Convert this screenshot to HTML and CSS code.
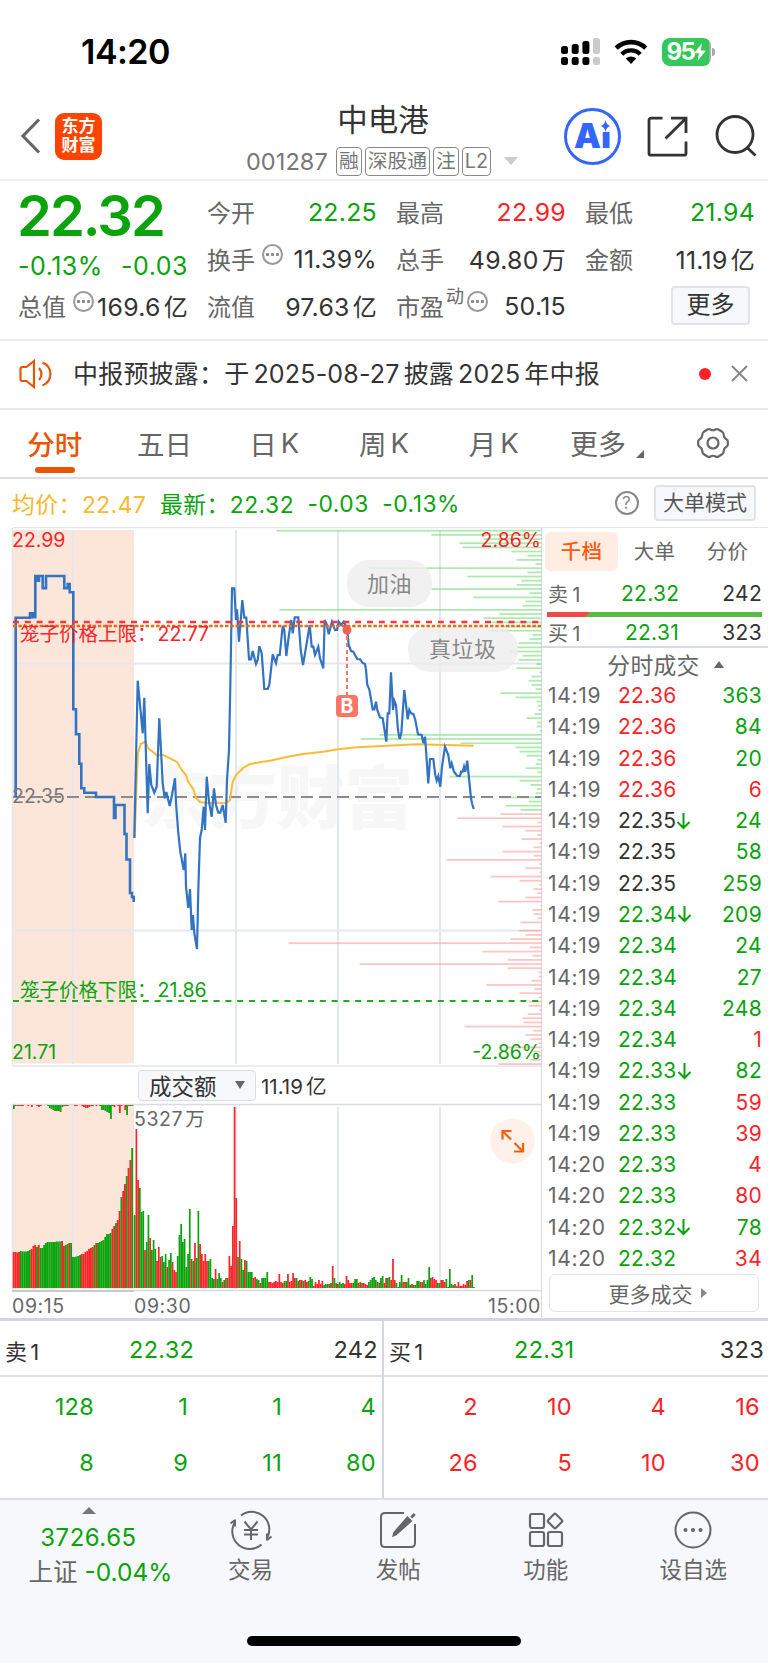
FILE: index.html
```
<!DOCTYPE html>
<html lang="zh-CN">
<head>
    <meta charset="UTF-8">
    <title>中电港 001287</title>
    <link rel="stylesheet" href="styles.css">
</head>
<body>
<div class="status-bar">
    <span class="clock">14:20</span>
    <div class="status-icons">
        <svg class="signal" width="40" height="28" viewBox="0 0 40 28">
            <rect x="0" y="8" width="7" height="8" rx="2.5"/>
            <rect x="10.7" y="6" width="7" height="10" rx="2.5"/>
            <rect x="21.4" y="3" width="7" height="13" rx="2.5"/>
            <rect x="32" y="0" width="7" height="16" rx="2.5" fill="#cacaca"/>
            <rect x="0" y="19" width="7" height="8" rx="2.5"/>
            <rect x="10.7" y="19" width="7" height="8" rx="2.5"/>
            <rect x="21.4" y="19" width="7" height="8" rx="2.5"/>
            <rect x="32" y="19" width="7" height="8" rx="2.5" fill="#cacaca"/>
        </svg>
        <svg class="wifi" width="34" height="26" viewBox="0 0 34 26">
            <path d="M2.2 9.2a21 21 0 0 1 29.6 0" fill="none" stroke="#000" stroke-width="4.6"/>
            <path d="M7.8 15.2a13 13 0 0 1 18.4 0" fill="none" stroke="#000" stroke-width="4.4"/>
            <path d="M17 25l-5.2-5.4a7.6 7.6 0 0 1 10.4 0z"/>
        </svg>
        <div class="battery">95<svg width="12" height="18" viewBox="0 0 12 18"><path d="M8 0L0 10.3h5L3.6 18 12 7.4H6.8z" fill="#fff"/></svg></div>
    </div>
</div>

<header class="header">
    <div class="header-side">
        <svg width="21" height="36" viewBox="0 0 21 36"><path d="M19 1.5L3 18l16 16.5" fill="none" stroke="#666" stroke-width="3.2"/></svg>
        <div class="logo">东方<br>财富</div>
    </div>
    <div class="header-title">
        <h1>中电港</h1>
        <div class="code-line">
            <span class="code">001287</span>
            <span class="tag">融</span><span class="tag">深股通</span><span class="tag">注</span><span class="tag">L2</span>
            <i class="caret"></i>
        </div>
    </div>
    <div class="header-side header-tools">
        <div class="ai">Ai<svg width="11" height="12" viewBox="0 0 10 12"><path d="M5 0q.8 5 5 6-4.200 1-5 6-.8-5-5-6 4.200-1 5-6z" fill="#36f"/></svg></div>
        <svg width="41" height="41" viewBox="0 0 41 41" fill="none" stroke="#333" stroke-width="2.800">
            <path d="M15.500 2.200H4a2 2 0 0 0-2 2v33a2 2 0 0 0 2 2h33a2 2 0 0 0 2-2V25.500M24 2.200h15V17M39 2.200L18.500 22.500"/>
        </svg>
        <svg width="42" height="42" viewBox="0 0 42 42" fill="none" stroke="#333" stroke-width="2.800">
            <circle cx="20" cy="19.500" r="18"/><path d="M32 32.500l8.500 8"/>
        </svg>
    </div>
</header>

<section class="quote">
    <div class="quote-price">
        <div class="price">22.32</div>
        <div class="change"><span>-0.13%</span><span>-0.03</span></div>
    </div>
    <div class="cell"><span>今开</span><b class="green">22.25</b></div>
    <div class="cell"><span>最高</span><b class="red">22.99</b></div>
    <div class="cell"><span>最低</span><b class="green">21.94</b></div>
    <div class="cell"><span>换手</span><i class="dots"></i><b>11.39%</b></div>
    <div class="cell"><span>总手</span><b>49.80<em>万</em></b></div>
    <div class="cell"><span>金额</span><b>11.19<em>亿</em></b></div>
    <div class="cell"><span>总值</span><i class="dots"></i><b>169.6<em>亿</em></b></div>
    <div class="cell"><span>流值</span><b>97.63<em>亿</em></b></div>
    <div class="cell"><span>市盈</span><sup>动</sup><i class="dots tight"></i><b>50.15</b></div>
    <div class="cell"><button class="more-btn">更多</button></div>
</section>

<div class="notice">
    <svg width="33" height="30" viewBox="0 0 33 30" fill="none" stroke="#ea5504" stroke-width="2.200">
        <path d="M15 2L7.500 8H3.500Q1.500 8 1.500 10v10q0 2 2 2h4L15 28z"/><path d="M20 9q5 6 0 12M23.500 3.500C34 8 34 22 23.500 26.500"/>
    </svg>
    <p>中报预披露：于<em></em>2025-08-27<em></em>披露<em></em>2025<em></em>年中报</p>
    <i class="dot"></i>
    <svg width="17" height="17" viewBox="0 0 17 17"><path d="M1 1l15 15M16 1L1 16" stroke="#888" stroke-width="2"/></svg>
</div>

<nav class="tabs">
    <a class="active">分时</a>
    <a>五日</a>
    <a>日<em></em>K</a>
    <a>周<em></em>K</a>
    <a>月<em></em>K</a>
    <a class="tab-more">更多<i></i></a>
    <a><svg width="34" height="34" viewBox="0 0 34 34" fill="none" stroke="#666" stroke-width="2.200" stroke-linejoin="round">
        <path d="M11.500 3.500q1.500-1 3 0 2.500 1.500 5 0 1.500-1 3 0l4 2.500q1.300 1 1.200 3 0 2.500 2.300 4 1.800 1 1.800 2.300v3.400q0 1.300-1.800 2.300-2.300 1.500-2.300 4 .1 2-1.200 3l-4 2.500q-1.500 1-3 0-2.500-1.500-5 0-1.500 1-3 0l-4-2.500q-1.300-1-1.200-3 0-2.500-2.300-4-1.800-1-1.800-2.300v-3.400q0-1.300 1.800-2.300 2.300-1.500 2.300-4-.1-2 1.200-3z"/>
        <circle cx="17" cy="17" r="5.500"/>
    </svg></a>
</nav>

<div class="info">
    <span class="avg">均价：22.47</span>
    <span class="green">最新：22.32</span>
    <span class="green">-0.03</span>
    <span class="green">-0.13%</span>
    <i class="help">?</i>
    <button class="mode-btn">大单模式</button>
</div>

<main class="board">
    <div class="charts">
        <svg id="priceChart" class="price-chart" width="542" height="540" viewBox="0 527 542 540"></svg>
        <div class="volume-head">
            <span class="select">成交额<i></i></span>
            <span>11.19<em>亿</em></span>
        </div>
        <svg id="volumeChart" class="volume-chart" width="542" height="216" viewBox="0 1103 542 216"></svg>
    </div>

    <aside class="side">
        <div class="side-tabs"><a class="active">千档</a><a>大单</a><a>分价</a></div>
        <div class="level"><span>卖<em></em>1</span><b class="green">22.32</b><b>242</b></div>
        <div class="ratio"><svg width="215" height="5" viewBox="0 0 215 5"><path d="M0 0h215v5H0z" fill="#5bb947"/><path d="M0 0h43l-5 5H0z" fill="#ee4a4a"/></svg></div>
        <div class="level"><span>买<em></em>1</span><b class="green">22.31</b><b>323</b></div>
        <div class="trades-title">分时成交<i></i></div>
        <div id="trades" class="trades"></div>
        <button class="trades-more">更多成交<i></i></button>
    </aside>
</main>

<section class="depth">
    <div class="depth-half">
        <div class="depth-head"><span>卖<em></em>1</span><b class="green">22.32</b><b>242</b></div>
        <div class="depth-grid green">
            <span>128</span><span>1</span><span>1</span><span>4</span>
            <span>8</span><span>9</span><span>11</span><span>80</span>
        </div>
    </div>
    <div class="depth-half">
        <div class="depth-head"><span>买<em></em>1</span><b class="green">22.31</b><b>323</b></div>
        <div class="depth-grid red">
            <span>2</span><span>10</span><span>4</span><span>16</span>
            <span>26</span><span>5</span><span>10</span><span>30</span>
        </div>
    </div>
</section>

<footer class="bottom">
    <div class="bottom-nav">
        <div class="index">
            <i></i>
            <div class="green">3726.65</div>
            <div>上证 <span class="green">-0.04%</span></div>
        </div>
        <a>
            <svg width="44" height="40" viewBox="0 0 44 40" fill="none" stroke="#666" stroke-width="2">
                <path d="M12 5.500A17.500 17.500 0 0 1 38.500 27M38 30.500v-7M38 30l4.500-3.500M32.500 34.500A17.500 17.500 0 0 1 5.500 13M6 9.500v7M6 10l-4.500 3.500"/>
                <path d="M15.500 11.500l6.500 8 6.500-8M22 19.500V30M15 20h14M15 24.500h14"/>
            </svg>
            <span>交易</span>
        </a>
        <a>
            <svg width="40" height="40" viewBox="0 0 40 40" fill="none" stroke="#666" stroke-width="2">
                <path d="M26 3H7q-4 0-4 4v26q0 4 4 4h26q4 0 4-4V14"/>
                <path d="M29.500 7.500l3.500 3.500-15 13.500-2.500 1 .8-3z" fill="#666"/><path d="M34 4.800l2 2" stroke-width="5"/>
            </svg>
            <span>发帖</span>
        </a>
        <a>
            <svg width="36" height="40" viewBox="0 0 36 40" fill="none" stroke="#666" stroke-width="2.200">
                <rect x="2" y="4" width="14" height="14" rx="2"/><rect x="2" y="22" width="14" height="14" rx="2"/>
                <rect x="20" y="22" width="14" height="14" rx="2"/><rect x="21.500" y="5.500" width="11" height="11" rx="1.500" transform="rotate(45 27 11)"/>
            </svg>
            <span>功能</span>
        </a>
        <a>
            <svg width="40" height="40" viewBox="0 0 40 40" fill="none" stroke="#666" stroke-width="2">
                <circle cx="20" cy="20" r="17.500"/>
                <g fill="#666" stroke="none"><circle cx="12.500" cy="20" r="2"/><circle cx="20" cy="20" r="2"/><circle cx="27.500" cy="20" r="2"/></g>
            </svg>
            <span>设自选</span>
        </a>
    </div>
    <div class="home-bar"></div>
</footer>

<script src="chart.js"></script>
</body>
</html>
```
FILE: styles.css
```
* {
    box-sizing: border-box;
}
body {
    margin: 0;
    width: 768px;
    height: 1663px;
    overflow: hidden;
    background-color: #fff;
    color: #333;
    font-family: Inter, "Noto Sans CJK SC", sans-serif;
    font-size: 24px;
    display: flex;
    flex-direction: column;
}
b, em, i {
    font-weight: normal;
    font-style: normal;
}
em {
    margin-left: 4px;
}
svg {
    display: block;
    flex: none;
}
button {
    font-family: inherit;
    color: #333;
    padding: 0;
    border: 2px solid #e2e3e9;
    border-radius: 4px;
    background-color: #f7f8fb;
}
.green {
    color: #09a30c;
}
.red {
    color: #fa2327;
}

/* status bar */
.status-bar {
    height: 84px;
    padding: 18px 57px 0 81px;
    display: flex;
    justify-content: space-between;
}
.clock {
    font-size: 34px;
    line-height: 67px;
    font-weight: 600;
    letter-spacing: -0.5px;
    color: #000;
}
.status-icons {
    display: flex;
    align-items: center;
    height: 67px;
}
.wifi {
    margin: 0 14px 0 13px;
}
.battery {
    position: relative;
    width: 49px;
    height: 28px;
    border-radius: 8px;
    background: linear-gradient(90deg, #34c759 95%, #aaa 95%);
    color: #fff;
    font-size: 24px;
    font-weight: 700;
    letter-spacing: -1.5px;
    display: flex;
    align-items: center;
    justify-content: center;
}
.battery:after {
    content: "";
    position: absolute;
    right: -4px;
    top: 10px;
    width: 3px;
    height: 8px;
    border-radius: 0 3px 3px 0;
    background-color: #aaa;
}

/* header */
.header {
    height: 97px;
    padding: 0 11px 0 20px;
    border-bottom: 2px solid #f0f0f0;
    display: flex;
    justify-content: space-between;
}
.header-side {
    width: 196px;
    height: 104px;
    display: flex;
    align-items: center;
    gap: 14px;
}
.logo {
    width: 47px;
    height: 47px;
    padding-top: 4px;
    border-radius: 9px;
    background-color: #ff4400;
    color: #fff;
    font-size: 17px;
    line-height: 19px;
    font-weight: 700;
    text-align: center;
}
.header-title {
    display: flex;
    flex-direction: column;
    align-items: center;
}
.header-title h1 {
    margin: 18px 0 0;
    font-size: 30.5px;
    line-height: 36px;
    font-weight: 400;
}
.code-line {
    height: 30px;
    margin: 8px 0 0 -2px;
    display: flex;
    align-items: center;
    color: #777;
}
.code {
    font-size: 23.500px;
    margin-right: 8px;
    letter-spacing: 0.1px;
}
.tag {
    height: 29px;
    padding: 0 2px;
    margin-right: 3px;
    border: 1.500px solid #888;
    border-radius: 4px;
    font-size: 19.800px;
    line-height: 26px;
}
.caret {
    margin-left: 10px;
    border: 7px solid transparent;
    border-top: 8px solid #ccc;
    border-bottom: 0;
}
.header-tools {
    width: 207px;
    justify-content: flex-end;
    gap: 27px;
}
.header-tools .ai {
    margin-right: -1px;
}
.ai {
    position: relative;
    width: 57px;
    height: 57px;
    border: 3px solid #3366ff;
    border-radius: 50%;
    color: #3366ff;
    font-size: 34px;
    line-height: 50px;
    font-weight: 900;
    text-align: center;
}
.ai svg {
    position: absolute;
    right: 7px;
    top: 9px;
    background-color: #fff;
}

/* quote */
.quote {
    height: 160px;
    padding: 8px 13px 0 19px;
    border-bottom: 2px solid #ececee;
    display: grid;
    grid-template-columns: repeat(4, 1fr);
    grid-template-rows: repeat(3, 47px);
    column-gap: 20px;
}
.quote-price {
    grid-row: span 2;
    color: #09a30c;
}
.price {
    margin-left: -2px;
    font-size: 56px;
    line-height: 54px;
    font-weight: 600;
    letter-spacing: -2px;
}
.change {
    display: flex;
    justify-content: space-between;
    font-size: 25px;
    letter-spacing: 0.5px;
    line-height: 47px;
    margin-left: -1px;
}
.cell {
    display: flex;
    align-items: center;
    margin: -2px 0 0 -1px;
    white-space: nowrap;
}
.cell span {
    color: #666;
}
.cell b {
    margin-left: auto;
    font-size: 24.800px;
    letter-spacing: 0.3px;
}
.cell em {
    font-size: 24px;
    margin-left: 3px;
}
.cell sup {
    font-size: 18px;
    margin: -18px 0 0 2px;
    line-height: 20px;
    color: #666;
}
.dots {
    width: 21px;
    height: 21px;
    margin: -9px 0 0 7px;
    border: 2px solid #999;
    border-radius: 50%;
    background: radial-gradient(circle at 50% 50%, #888 1.3px, transparent 1.8px) center / 5px 17px;
}
.dots.tight {
    margin-left: 3px;
}
.more-btn {
    width: 79px;
    height: 39px;
    margin: -1px 5px 0 auto;
    font-size: 24px;
    line-height: 34px;
}

/* notice */
.notice {
    height: 69px;
    padding: 0 20px 2px 19px;
    border-bottom: 2px solid #e9e9ed;
    display: flex;
    align-items: center;
}
.notice p {
    margin: -4px auto 0 21px;
    font-size: 25px;
    letter-spacing: 0.2px;
}
.notice .dot {
    width: 12px;
    height: 12px;
    margin-right: 20px;
    border-radius: 50%;
    background-color: #fa2327;
}

/* period tabs */
.tabs {
    height: 69px;
    border-bottom: 2px solid #dddde5;
    display: grid;
    grid-template-columns: repeat(7, 1fr);
    color: #666;
    font-size: 27.500px;
}
.tabs a {
    position: relative;
    height: 65px;
    display: flex;
    align-items: center;
    justify-content: center;
}
.tabs .active {
    color: #ea5504;
    font-weight: 500;
}
.tabs .active:after {
    content: "";
    position: absolute;
    left: 35px;
    bottom: 2px;
    width: 40px;
    height: 6px;
    border-radius: 3px;
    background-color: #ea5504;
}
.tabs .tab-more {
    padding-left: 7px;
    font-size: 28px;
}
.tab-more i {
    margin: 22px 0 0 10px;
    border-left: 8px solid transparent;
    border-bottom: 8px solid #666;
}

/* average / latest line */
.info {
    height: 48px;
    padding: 0 12px 0 12px;
    display: flex;
    align-items: center;
    gap: 13.500px;
    font-size: 22.800px;
    letter-spacing: 0.500px;
}
.avg {
    color: #fcb72e;
}
.help {
    width: 24px;
    height: 24px;
    margin-left: auto;
    margin-right: 2px;
    border: 2px solid #888;
    border-radius: 50%;
    color: #888;
    font-size: 17px;
    line-height: 20px;
    text-align: center;
}
.mode-btn {
    width: 102px;
    height: 36px;
    color: #555;
    font-size: 21px;
    line-height: 30px;
}

/* charts */
.board {
    height: 794px;
    border-bottom: 3px solid #d2d4de;
    display: flex;
}
.charts {
    width: 542px;
    border-right: 1px solid #d8dae2;
}
svg text {
    font-family: Inter, "Noto Sans CJK SC", sans-serif;
    font-size: 19.500px;
}
.volume-head {
    height: 36px;
    padding-left: 138px;
    display: flex;
    align-items: center;
    gap: 5px;
    font-size: 20.500px;
}
.volume-head em {
    margin-left: 3px;
}
.select {
    width: 118px;
    height: 31px;
    padding: 0 10px;
    border: 1px solid #dcdde3;
    border-radius: 4px;
    background-color: #f7f8fb;
    font-size: 22.500px;
    display: flex;
    align-items: center;
    justify-content: space-between;
}
.select i {
    border: 5px solid transparent;
    border-top: 8px solid #666;
    border-bottom: 0;
}

/* order book side */
.side {
    width: 226px;
    border-top: 1px solid #e4e5ea;
    font-size: 21px;
    letter-spacing: 0.3px;
}
.side-tabs {
    padding: 4px 0 0 3px;
    display: flex;
    color: #666;
    font-size: 20.500px;
}
.side-tabs a {
    width: 73px;
    height: 39px;
    line-height: 39px;
    text-align: center;
    border-radius: 6px;
}
.side-tabs .active {
    background-color: #ffece3;
    color: #ff5a0a;
    font-weight: 500;
}
.level {
    height: 29px;
    margin-top: 8px;
    padding: 0 6px 0 6px;
    display: grid;
    grid-template-columns: 73px 60px 1fr;
    align-items: center;
}
.level span {
    color: #666;
    font-size: 20px;
}
.level b {
    text-align: right;
}
.level b:nth-child(2) {
    padding-right: 2px;
}
.ratio {
    padding: 4px 5px 0;
}
.ratio + .level {
    margin-top: 1px;
    height: 30px;
    border-bottom: 2px solid #d8dbe3;
}
.trades-title {
    height: 33px;
    padding: 0 0 1px 21px;
    display: flex;
    align-items: center;
    justify-content: center;
    font-size: 22.800px;
    color: #666;
}
.trades-title i {
    margin-left: 14px;
    border: 5.500px solid transparent;
    border-bottom: 7px solid #666;
    border-top: 0;
}
.trades {
    margin-top: -1px;
}
.trade {
    height: 31.280px;
    padding: 0 6px 0 6px;
    display: grid;
    grid-template-columns: 70px 1fr 50px;
    align-items: center;
}
.trade time {
    color: #666;
    letter-spacing: 0.7px;
}
.trade span {
    display: flex;
    align-items: center;
}
.trade b {
    text-align: right;
}
.trades-more {
    width: 210px;
    height: 38px;
    margin-left: 7px;
    padding-left: 7px;
    border: 1px solid #e3e3e6;
    border-radius: 6px;
    background-color: #fff;
    color: #666;
    font-size: 21px;
    display: flex;
    align-items: center;
    justify-content: center;
}
.trades-more i {
    margin-left: 8px;
    border: 5px solid transparent;
    border-left: 6px solid #888;
    border-right: 0;
}

/* depth */
.depth {
    height: 177px;
    display: flex;
    font-size: 23.500px;
    letter-spacing: 0.3px;
}
.depth-half {
    width: 384px;
}
.depth-half:first-child {
    border-right: 2px solid #d5d7df;
}
.depth-head {
    height: 56px;
    padding: 3px 4px 0 5px;
    border-bottom: 2px solid #dfe0e7;
    display: grid;
    grid-template-columns: 124px 1fr 1fr;
    align-items: center;
}
.depth-head span {
    font-size: 22px;
}
.depth-head b:last-child {
    text-align: right;
}
.depth-head em {
    margin-left: 3px;
}
.depth-grid {
    width: 376px;
    display: grid;
    grid-template-columns: repeat(4, 94px);
    grid-auto-rows: 56px;
    padding-top: 2px;
    line-height: 56px;
    text-align: right;
}
.depth-half + .depth-half .depth-head {
    grid-template-columns: 125px 1fr 1fr;
}

/* bottom nav */
.bottom {
    flex: 1;
    border-top: 2px solid #dfe0e5;
    background-color: #f7f8fb;
}
.bottom-nav {
    height: 136px;
    padding-right: 1px;
    display: flex;
    color: #666;
}
.index {
    width: 177px;
    padding: 7px 0 0 24px;
    font-size: 24.500px;
    line-height: 35px;
    display: flex;
    flex-direction: column;
    align-items: center;
    white-space: nowrap;
}
.index i {
    margin: 0 22px 6px 0;
    border: 7px solid transparent;
    border-bottom: 7px solid #777;
    border-top: 0;
}
.index div:nth-child(2) {
    font-size: 24px;
    letter-spacing: 0.5px;
    margin-right: 24px;
}
.bottom-nav a {
    width: 147.700px;
    padding-top: 10px;
    display: flex;
    flex-direction: column;
    align-items: center;
    font-size: 22.500px;
    line-height: 40px;
}
.home-bar {
    width: 274px;
    height: 10px;
    margin: 0 0 0 247px;
    border-radius: 5px;
    background-color: #000;
}
```
FILE: chart.js
```
const RED = '#fa2327';
const GREEN = '#09a30c';
const GRID = '#e4e7ee';

// call auction 09:15 - 09:30
const auction = '15.7,797 15.7,617.7 30,617.7 30,613.3 32.7,613.3 32.7,617.3 35.3,617.3 35.3,576 37.3,576 37.3,580.7 39,580.7 39,576 42.7,576 42.7,588.3 46,588.3 46,576 64.3,576 64.3,588.3 67.7,588.3 67.7,584 69.7,584 69.7,592.3 73.3,592.3 73.3,709.3 76,709.3 76,734.3 79.3,734.3 79.3,763.7 81.3,763.7 81.3,788.3 84.3,788.3 84.3,792.7 96,792.7 96,797 114,797 114,818 115.5,818 115.5,805 124.500,805 124.500,834 126.500,834 126.500,859.500 130,859.500 130,893 132,893 132,897 133.700,897 133.700,902';
const price = '134.3,838 137.7,680.7 142.7,733.3 144.3,697.7 147.7,813.3 149.3,764 151.3,785 154.3,792.7 156.7,786.7 159.3,718.3 162.7,783.3 164.7,798.3 166.3,792 169.7,806 172,795 175,778.3 176,803 178.3,833 180.3,851.7 183.7,870 185.3,853.3 186,886.7 188.3,908 190,889 191.7,930 193,915 194.3,933 197,949 198.3,890 200,838 201.7,830 203.7,806.7 205,830 206.7,776.7 209,801.7 211.7,816.7 214,788.3 216,805 218.3,812.7 220.3,812.7 222.7,805 225.7,822.7 227,780 229,750 230.3,686.7 232,588.3 234.3,588.3 236,620 237,609.3 239,641.7 242.3,600 244.3,617.7 246.3,617.7 249,659.3 251,659.3 252.7,651 256,664 257.7,660 259.3,646 261.7,653.3 264.3,689 267.7,689 269.3,685 272.7,654.3 276,663.3 277.7,655 279.7,655 282.7,626 284.3,630 286.3,656 288.7,636.7 291.3,620 292.7,633.3 294.7,617.3 298.3,617.3 300.7,650 303,665 306.7,643.3 309.7,625 311.7,646.7 313.3,646.7 315,655 318.3,646.7 320,658.3 323.3,668.3 324.7,620 326.7,624 328.7,634.3 332,621.7 335,630 337,630 338.7,621.7 341,625 343.7,621.7 347,628 348.7,645 351,651 353.3,651.7 355,655 357.3,659 360.3,659.3 362.3,662.7 365,664 366,670 367.3,685 369.3,689.3 372.7,709.3 374.3,709.3 376,701.7 377.3,710 380,717.3 382.7,718.3 386.3,741.7 387.7,713.3 389.3,713.3 391,672.3 393,710 394.3,700.7 396,705 398,730 399.7,739 401.3,733.3 404.3,690 407.7,719.3 409.3,710 411,713.3 413.3,714 415.3,720 418,734.3 421.7,735 423.3,743.3 425,736.7 426,750 428.3,783.3 430,759 433.3,759 435.3,775 436.7,780.7 438.3,776 440.3,786.7 442,766.7 445,746.7 448.3,755 450.3,768.3 451.7,763.3 454,771.7 457.3,776 460,776 461,771.7 462.7,771.7 464,766.7 465.3,771.7 467.3,760.7 469,778.3 471,798 472,803.3 473.7,809';
const average = '134.7,838 136.5,787 138,753 140.7,744 145.3,741.7 148.3,748.3 156.7,755 163.3,755 170,758.3 176.7,761.7 181.7,770 186,775 188.3,781.7 193.3,789.3 196,798 200,802 206.7,803 226.7,802.7 230,800 231.3,791 232.7,781.7 236,775 243.3,767.7 250,764 263,761.7 270,760.7 286.7,757 303,754 323.3,751.7 338,749.3 356.7,747.3 383,746 416.7,744.3 473.7,745.7';

// resting orders per price level, top to bottom
const sells = [265,110,58,82,79,30,14,25,6,172,14,74,20,25,110,12,68,16,19,262,42,58,52,38,53,9,12,23,24,32,19,23,5,25,2,10,13,10,6,41,26,5,4,3,7,15,4,5,2,162,181,81,26,22,15,4,6,16,4,92,22,11,5,6,40,13,36,21];
const buys = [41,84,4,39,16,4,20,2,8,39,8,95,2,16,2,51,22,2,8,4,16,43,1,9,8,4,21,1,22,16,31,253,12,59,9,34,182,34,3,3,10,55,7,22,3,13,13,2,14,19,18,77,8,16,11,3,33,8,5,12,43];

const vline = (x, y1, y2) => `<path d="M${x} ${y1}V${y2}" stroke="${GRID}" stroke-width="2"/>`;
const hline = (y, color, extra) => `<path d="M13 ${y}H541" stroke="${color}" ${extra}/>`;

function drawPrice() {
    let s = '<rect x="13" y="530" width="121" height="533.500" fill="#fce6da"/>';
    s += '<text x="141" y="823" style="font-size:68px;font-weight:800" fill="#f7f7f8">东方财富</text>';
    s += hline(527.500, GRID, 'stroke-width="1.500"') + hline(1066, '#ebecf0', 'stroke-width="2"');
    s += `<path d="M12.500 528V1066" stroke="${GRID}" stroke-width="1.500"/>`;
    [73, 236, 338, 440].forEach(x => s += vline(x, 530, 1064));
    [663.500, 930.500].forEach(y => s += hline(y, GRID, 'stroke-width="2"'));

    sells.concat(buys).forEach((len, i) => {
        const color = i < sells.length ? '#5fd35f' : '#ff8c8c';
        s += `<rect x="${541.500 - len}" y="${(529.800 + i * 4.167).toFixed(1)}" width="${len}" height="1.800" fill="${color}" opacity=".5"/>`;
    });

    // comment bubbles
    s += '<g fill="#eee" opacity=".8"><rect x="347" y="560" width="85" height="47" rx="22"/><rect x="408" y="627" width="110" height="45" rx="22"/></g>';
    s += '<g fill="#888" style="letter-spacing:0.5px"><text x="367" y="592" style="font-size:22px">加油</text><text x="429" y="657" style="font-size:22px">真垃圾</text></g>';

    s += hline(797, '#8a8a8a', 'stroke-width="2" stroke-dasharray="12 6"');
    s += hline(1001, '#1cae1e', 'stroke-width="2.200" stroke-dasharray="6 5.800"');
    s += `<polyline points="${average}" fill="none" stroke="#fdbb35" stroke-width="2"/>`;
    s += `<polyline points="${auction}" fill="none" stroke="#3273c2" stroke-width="2.600"/>`;
    s += `<polyline points="${price}" fill="none" stroke="#3273c2" stroke-width="2.200"/>`;
    s += hline(622, '#ee3a3e', 'stroke-width="2.400" stroke-dasharray="6 5.800"');
    s += hline(626, '#ec6a12', 'stroke-width="2.300" stroke-dasharray="3.500 1.800"');

    s += `<text x="12" y="547" fill="${RED}">22.99</text><text x="541" y="547" fill="${RED}" text-anchor="end">2.86%</text>`;
    s += '<text x="12" y="803" fill="#777">22.35</text>';
    s += `<text x="12" y="1059" fill="${GREEN}">21.71</text><text x="541" y="1059" fill="${GREEN}" text-anchor="end">-2.86%</text>`;
    s += `<text x="20" y="641" fill="${RED}">笼子价格上限：<tspan dx="1">22.77</tspan></text>`;
    s += `<text x="20" y="997" fill="${GREEN}">笼子价格下限：<tspan dx="1">21.86</tspan></text>`;

    // buy marker
    s += '<circle cx="347" cy="630" r="4.500" fill="#f4604f"/><path d="M347 636V695" stroke="#ff7565" stroke-width="2" stroke-dasharray="4 3"/>';
    s += '<rect x="336" y="695" width="22" height="22" rx="4" fill="#ff7565"/><text x="347" y="713" text-anchor="middle" fill="#fff" style="font-weight:700">B</text>';
    document.getElementById('priceChart').innerHTML = s;
}

const auctionVol = [36,36,35.5,36,37,36.5,36.5,36.5,37,38,39,42,43,41,43,40,40,43,45,46,46,46,46,46,46.5,46.5,46.5,47,42,43,44,45,45,31,31,31.5,32,33,34,34,36,37,39,40,41,43,45,45,46,47,48,51,54,54,55,59,62,65,68,77,91,97,104,112,120,128,140];
const auctionDir = 'rrrrggggggrrrgrggggggggggggrrggrggggggrrrrrrrgrggggggggrrgrrgrrgrrg';
const unmatched = 'g4 r1 r1 g1 r1 r1 0 0 r1 0 r2 0 0 r1 r2 r1 0 0 0 g1 g3 g4 g5 g6 g6 g6 g7 g2 r1 r1 g1 0 0 0 r1 r1 0 0 r1 r2 r3 r3 r2 g1 r1 0 r1 0 g1 g5 g5 g6 g7 g8 g14 g1 r2 0 r1 r8 r1 0 r5 g10 g1 r1 g1'.split(' ');
const volumes = 'g73 r159 r108 g100 g76 g77 r38 g46 g73 r50 g38 g48 g39 r27 r41 r31 g32 g26 g34 r21 g28 g35 r26 r18 r16 g32 g53 g64 g46 g49 g21 g34 g79 r29 g27 r45 g30 g77 r44 r34 r27 r34 r27 g27 g29 g10 g9 r19 g9 g15 g10 r6 g8 r10 g10 r32 r22 r62 r181 r90 g31 r47 g29 g18 r28 g27 g16 g16 g16 r10 r11 g9 g8 r5 g10 g10 g10 g16 r6 r6 r5 r6 r7 r6 r14 r6 r5 g7 g7 r14 r6 r7 r15 r10 g10 g7 r8 r8 g7 r8 r6 g7 g11 g9 r2 r6 r4 r8 r4 r7 g3 g4 g4 r4 g5 r22 g10 g5 r4 g6 g4 g5 r4 r12 r8 r5 r5 g5 g9 g9 r5 r6 g5 r5 r4 r3 g6 g8 g10 g11 g8 r6 g5 g10 g12 r5 r10 g10 g11 r8 r29 r8 g5 g1 g6 g13 r6 r6 g6 g10 g3 r4 g3 g3 g7 g7 r6 r6 g8 g4 g8 g21 r10 r11 r9 r8 g5 g5 r8 r8 r6 g9 g1 g19 g4 g3 r4 g2 r6 r2 r2 r4 r3 r7 g8 r8 g13 g1'.split(' ');

const bar = (x, y, w, h, dir) => `<rect x="${x.toFixed(2)}" y="${y}" width="${w}" height="${h}" fill="${dir === 'r' ? RED : GREEN}"/>`;

function drawVolume() {
    let s = '<rect x="13" y="1105" width="121" height="184" fill="#fce6da"/>';
    s += hline(1104.500, '#d9dbe2', 'stroke-width="1.500"');
    s += `<path d="M12.500 1104V1290" stroke="${GRID}" stroke-width="1.500"/>`;
    [73, 236, 338, 440].forEach(x => s += vline(x, 1107, 1289));
    auctionVol.forEach((v, i) => s += bar(12.700 + i * 1.796, 1288 - v, 1.850, v, auctionDir[i]));
    unmatched.forEach((v, i) => {
        if (v !== '0') s += bar(13 + i * 1.796, 1105, 1.800, +v.slice(1), v[0]);
    });
    const step = 341 / volumes.length;
    volumes.forEach((v, i) => {
        const h = +v.slice(1);
        s += bar(133.800 + i * step, 1288 - h, step.toFixed(2), h, v[0]);
    });
    s += hline(1290.500, '#d9dbe2', 'stroke-width="1.500"') + '<path d="M12 1291H134" stroke="#c9cacf" stroke-width="2"/>';
    s += '<g fill="#666" style="letter-spacing:0.6px"><text x="134" y="1126">5327<tspan dx="2">万</tspan></text><text x="12" y="1313">09:15</text><text x="134" y="1313">09:30</text><text x="541" y="1313" text-anchor="end">15:00</text></g>';
    // expand button
    s += '<circle cx="512.500" cy="1141" r="22.500" fill="#fff1ea"/>';
    s += '<path d="M502.500 1139.500V1131h9M503 1131.500l8 8M523 1143v8.500h-9M522.500 1151l-8-8" fill="none" stroke="#f2600f" stroke-width="2.200"/>';
    document.getElementById('volumeChart').innerHTML = s;
}

const trades = [
    ['14:19', '22.36', 'red', 363, 'green'],
    ['14:19', '22.36', 'red', 84, 'green'],
    ['14:19', '22.36', 'red', 20, 'green'],
    ['14:19', '22.36', 'red', 6, 'red'],
    ['14:19', '22.35', '', 24, 'green', true],
    ['14:19', '22.35', '', 58, 'green'],
    ['14:19', '22.35', '', 259, 'green'],
    ['14:19', '22.34', 'green', 209, 'green', true],
    ['14:19', '22.34', 'green', 24, 'green'],
    ['14:19', '22.34', 'green', 27, 'green'],
    ['14:19', '22.34', 'green', 248, 'green'],
    ['14:19', '22.34', 'green', 1, 'red'],
    ['14:19', '22.33', 'green', 82, 'green', true],
    ['14:19', '22.33', 'green', 59, 'red'],
    ['14:19', '22.33', 'green', 39, 'red'],
    ['14:20', '22.33', 'green', 4, 'red'],
    ['14:20', '22.33', 'green', 80, 'red'],
    ['14:20', '22.32', 'green', 78, 'green', true],
    ['14:20', '22.32', 'green', 34, 'red']
];
const arrow = '<svg width="15" height="18" viewBox="0 0 15 18"><path d="M7.500 1v15M1.500 10l6 6 6-6" fill="none" stroke="#09a30c" stroke-width="2"/></svg>';

document.getElementById('trades').innerHTML = trades.map(t =>
    `<div class="trade"><time>${t[0]}</time><span class="${t[2]}">${t[1]}${t[5] ? arrow : ''}</span><b class="${t[4]}">${t[3]}</b></div>`
).join('');
drawPrice();
drawVolume();
```
